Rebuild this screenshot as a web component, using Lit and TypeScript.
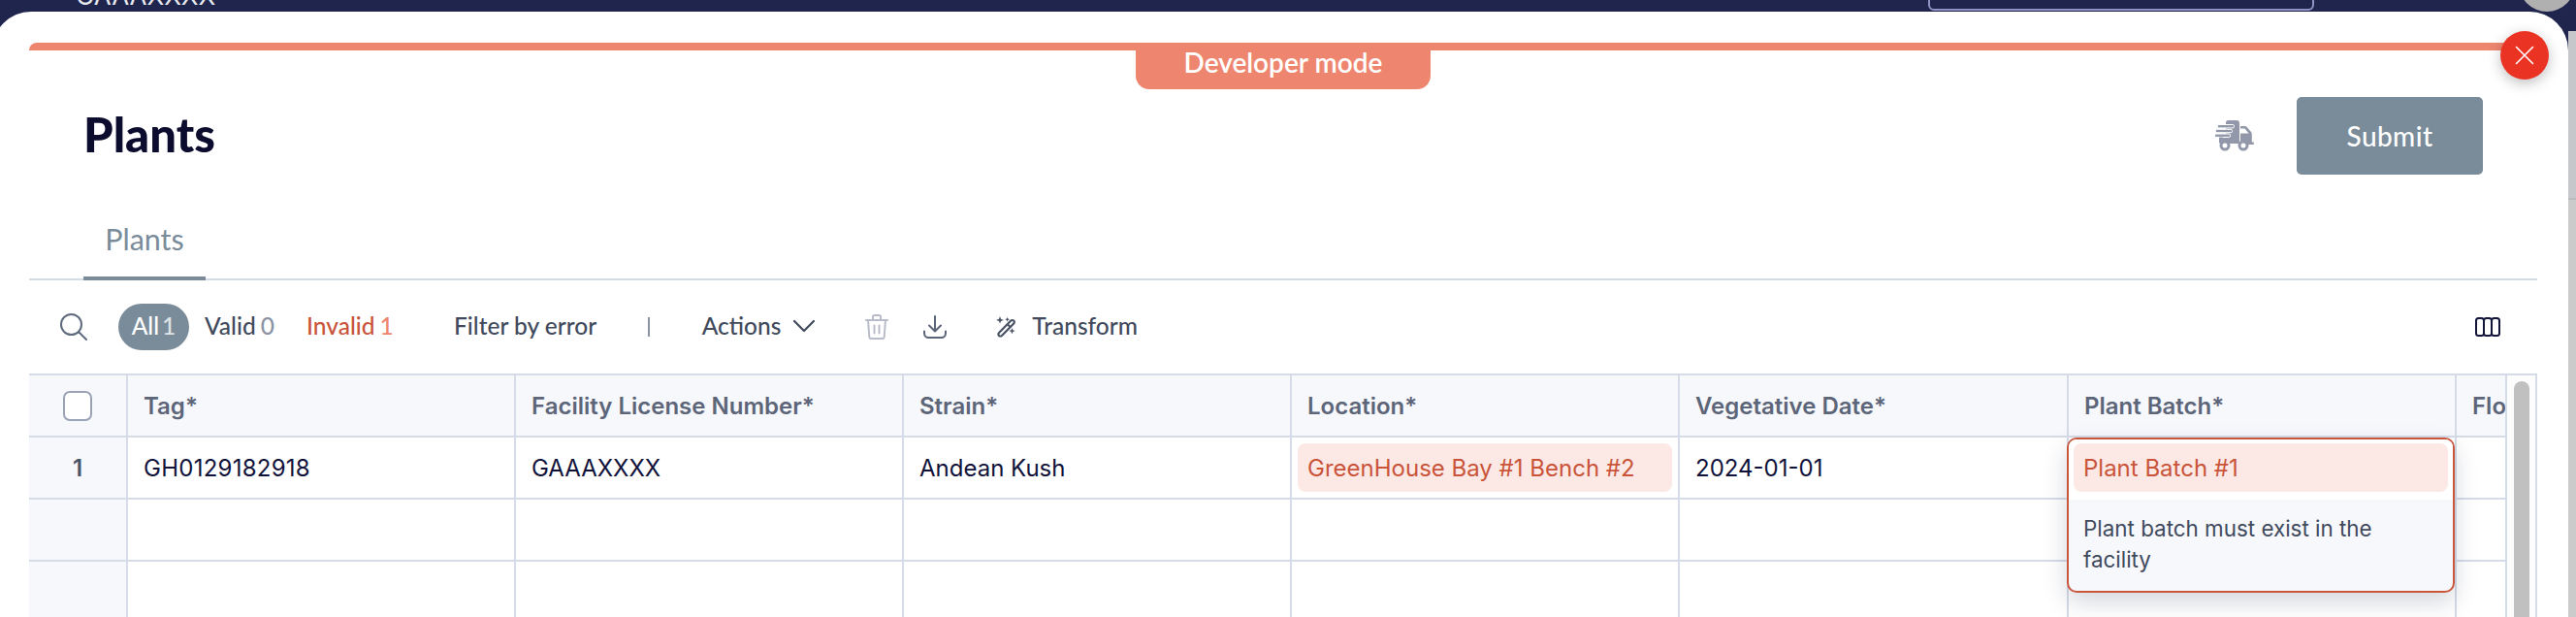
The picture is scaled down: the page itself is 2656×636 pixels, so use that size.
import { LitElement, html, css } from "lit";
import { customElement } from "lit/decorators.js";

const truck = html`<svg class="truck" width="40" height="32" viewBox="0 0 40 32" fill="#9298a9">
  <path d="M11 2.5A2.5 2.5 0 0 1 13.5 0H22a3 3 0 0 1 3 3v21H8v-6h3z"/>
  <path d="M26 6h4.5a3 3 0 0 1 2.2 1L37 12a3 3 0 0 1 .8 2v8.5h2V25H26z"/>
  <rect x="2.500" y="4.500" width="17" height="3.400" rx="1.300" stroke="#fff" stroke-width="1"/>
  <rect x="0.500" y="9.300" width="17" height="3.400" rx="1.300" stroke="#fff" stroke-width="1"/>
  <rect x="-0.500" y="14" width="16" height="3.400" rx="1.300" stroke="#fff" stroke-width="1"/>
  <rect x="4" y="17.500" width="4" height="6"/>
  <path d="M26 8.500h4.500l4 5H26z" fill="#fff"/>
  <circle cx="10" cy="26" r="4" fill="#fff" stroke="#9298a9" stroke-width="3"/>
  <circle cx="29" cy="26" r="4" fill="#fff" stroke="#9298a9" stroke-width="3"/>
</svg>`;

const close = html`<svg width="20" height="20" viewBox="0 0 20 20" fill="none" stroke="#fff" stroke-width="1.600" stroke-linecap="round">
  <path d="M1.500 1.500l17 17M18.500 1.500l-17 17"/>
</svg>`;

const search = html`<svg width="28" height="28" viewBox="0 0 28 28" fill="none" stroke="#5f6b7d" stroke-width="2" stroke-linecap="round">
  <circle cx="11.500" cy="11.500" r="10.500"/><path d="M19.500 19.500L27 27"/>
</svg>`;

const chevron = html`<svg width="24" height="14" viewBox="0 0 24 14" fill="none" stroke="#414a5c" stroke-width="2.200" stroke-linecap="round" stroke-linejoin="round">
  <path d="M2 2l10 10L22 2"/>
</svg>`;

const trash = html`<svg width="24" height="26" viewBox="0 0 24 26" fill="none" stroke="#b9bdc9" stroke-width="2" stroke-linecap="round" stroke-linejoin="round">
  <path d="M1 6h22M8 6V2.500A1.500 1.500 0 0 1 9.500 1h5A1.500 1.500 0 0 1 16 2.500V6M3 6l1.300 17a2 2 0 0 0 2 2h11.400a2 2 0 0 0 2-2L21 6M9.500 11.500v8M14.500 11.500v8"/>
</svg>`;

const download = html`<svg width="24" height="24" viewBox="0 0 24 24" fill="none" stroke="#5b6478" stroke-width="2" stroke-linecap="round" stroke-linejoin="round">
  <path d="M12 1v15M6 10.500l6 6 6-6M1 16.500v2A4.500 4.500 0 0 0 5.500 23h13a4.500 4.500 0 0 0 4.500-4.500v-2"/>
</svg>`;

const wand = html`<svg width="22" height="22" viewBox="0 0 22 22" fill="#4a5264">
  <path d="M16.300 4.600a2 2 0 0 1 2.900 0 2 2 0 0 1 0 2.900L6.900 19.900a2 2 0 0 1-2.900 0 2 2 0 0 1 0-2.900z" fill="none" stroke="#4a5264" stroke-width="2.200"/>
  <path d="M12.800 8.200l3 3" stroke="#4a5264" stroke-width="2"/>
  <path d="M5 0l1 2.800L8.800 4 6 5 5 7.800 4 5 1.200 4 4 2.800zM12.600 1l.7 1.600 1.700.7-1.700.7-.7 1.600-.7-1.600-1.700-.7 1.700-.7zM17.500 12l.9 2.200 2.200.9-2.200.9-.9 2.200-.9-2.200-2.200-.9 2.200-.9z"/>
</svg>`;

const cols = html`<svg width="26" height="20" viewBox="0 0 26 20" fill="none" stroke="#12143a" stroke-width="2" stroke-linejoin="round">
  <rect x="1" y="1" width="8" height="18" rx="2.500"/><rect x="9" y="1" width="8" height="18" rx="2.500"/><rect x="17" y="1" width="8" height="18" rx="2.500"/>
</svg>`;

const headers = ["Tag*", "Facility License Number*", "Strain*", "Location*", "Vegetative Date*", "Plant Batch*", "Flo"];

@customElement("app-root")
export class AppRoot extends LitElement {
  static styles = css`
    :host { display: block; width: 2656px; height: 636px; overflow: hidden; background: #1f254c; font-family: "Inter", "Liberation Sans", sans-serif; position: relative; }
    .nav { height: 12px; position: relative; overflow: hidden; display: flex; align-items: flex-end; }
    .nav-license { position: absolute; left: 78px; bottom: 2px; color: #e8e9ef; font-size: 26px; line-height: 28px; font-family: "Inter", sans-serif; }
    .nav-input { position: absolute; left: 1988px; width: 398px; height: 30px; bottom: 1px; box-sizing: border-box; border: 2px solid #8f93c4; border-radius: 6px; }
    .nav-avatar { position: absolute; left: 2597px; bottom: 0; width: 58px; height: 58px; border-radius: 50%; background: #b0b0b0; }
    .body { display: flex; height: 624px; }
    .modal { margin-left: -8px; width: 2656px; height: 624px; flex: none; box-sizing: border-box; background: #fff; border-radius: 40px 40px 0 0; padding: 32px 32px 0 38px; position: relative; overflow: hidden; }
    .strip { width: 8px; flex: none; display: flex; flex-direction: column; }
    .strip-top { height: 20px; background: #1f254c; }
    .strip-a { height: 172px; background: #c5c7cb; border-bottom: 2px solid #b8babe; }
    .strip-b { flex: 1; background: #cbcbcb; }
    .bar { height: 8px; background: #ee866f; border-radius: 8px 8px 0 0; }
    .badge { position: absolute; left: 1179px; top: 40px; width: 304px; height: 40px; box-sizing: border-box; padding-bottom: 16px; background: #ee866f; color: #fff; border-radius: 0 0 14px 14px; font-family: "Lato", sans-serif; font-weight: 600; font-size: 28px; display: flex; align-items: center; justify-content: center; }
    .close { position: absolute; left: 2586px; top: 20px; width: 50px; height: 50px; border-radius: 50%; background: #ea3323; display: flex; align-items: center; justify-content: center; box-shadow: 0 4px 14px rgba(0,0,0,.25); }
    .head { display: flex; align-items: center; justify-content: space-between; padding: 48px 56px 0 56px; height: 80px; }
    h1 { margin: 0 0 4px; font-family: "Lato", sans-serif; font-weight: 900; font-size: 49px; color: #0c0d2e; }
    .head-right { display: flex; align-items: center; gap: 44px; }
    .submit { width: 192px; height: 80px; background: #7a8c9a; color: #fff; border-radius: 5px; display: flex; align-items: center; justify-content: center; font-family: "Lato", sans-serif; font-weight: 500; font-size: 28px; letter-spacing: .4px; }
    .tabs { margin-top: 25px; height: 84px; box-sizing: border-box; border-bottom: 2px solid #d5dbe7; display: flex; padding-left: 56px; }
    .tab { width: 126px; height: 84px; box-sizing: border-box; border-bottom: 4px solid #7a8c9a; color: #7a8c9a; font-family: "Lato", sans-serif; font-size: 30.500px; display: flex; justify-content: center; padding-top: 23px; }
    .toolbar { height: 96px; display: flex; align-items: center; padding-left: 32px; color: #414a5c; font-family: "Lato", sans-serif; font-weight: 500; font-size: 24.500px; white-space: nowrap; }
    .icon { display: flex; }
    .pill { margin-left: 32px; width: 73px; height: 48px; box-sizing: border-box; padding-bottom: 3px; border-radius: 24px; background: #7a8c9a; color: #fff; display: flex; align-items: center; justify-content: center; gap: 3px; }
    .pill i, .count i { font-style: normal; opacity: .75; }
    .count { display: flex; gap: 5px; margin-bottom: 3px; }
    .valid { margin-left: 16px; width: 72px; }
    .valid i { color: #8b93a5; opacity: 1; }
    .invalid { margin-left: 33px; width: 84px; color: #c9543a; }
    .invalid i { color: #ee866f; opacity: 1; }
    .filter { margin-left: 68px; margin-bottom: 3px; }
    .sep { margin-left: 53px; width: 1.500px; height: 20px; background: #8b93a5; }
    .actions { margin-left: 54px; display: flex; align-items: center; gap: 12px; margin-bottom: 3px; }
    .trash { margin-left: 51px; }
    .download { margin-left: 36px; }
    .wand { margin-left: 50px; }
    .transform { margin-left: 16px; margin-bottom: 3px; }
    .cols { margin-left: auto; margin-right: 38px; }
    .tablewrap { border-top: 2px solid #d5dbe7; border-right: 2px solid #d5dbe7; background: #fff; display: flex; height: 300px; }
    .grid { width: 2555px; height: 300px; flex: none; overflow: hidden; display: grid; grid-template-columns: 102px 400px 400px 400px 400px 401px 400px 52px; grid-auto-rows: 64px; background: #fff; }
    .track { flex: 1; position: relative; background: #fdfdfd; }
    .thumb { position: absolute; left: 7px; top: 6px; width: 16px; height: 300px; border-radius: 8px; background: #c0c0c0; }
    .c { box-sizing: border-box; border-right: 2px solid #d5dbe7; border-bottom: 2px solid #d5dbe7; display: flex; align-items: center; padding-left: 16px; font-size: 24px; color: #10123a; white-space: nowrap; overflow: hidden; position: relative; }
    .tag { letter-spacing: .25px; }
    .g { background: #f6f8fc; }
    .hd { background: #f6f8fc; color: #5d6579; font-weight: 600; font-size: 24px; }
    .idx { justify-content: center; padding: 0; color: #4a5568; font-weight: 600; }
    .check { width: 30px; height: 31px; box-sizing: border-box; border: 2px solid #9aa3b5; border-radius: 7px; background: #fff; }
    .loc { padding: 6px; }
    .chip { flex: 1; height: 50px; border-radius: 8px; background: #fce9e6; color: #c9543a; display: flex; align-items: center; padding-left: 10px; }
    .batch { overflow: visible; padding: 0; z-index: 2; }
    .pop { position: absolute; left: -2px; top: 0; width: 400px; height: 160px; box-sizing: border-box; border: 2px solid #c9573c; border-radius: 10px; background: #f6f8fc; overflow: hidden; }
    .shadow { position: absolute; left: -2px; top: 0; width: 400px; height: 160px; border-radius: 10px; box-shadow: 0 10px 24px rgba(30,40,70,.18); }
    .pop-top { height: 62px; box-sizing: border-box; background: #fff; padding: 4px 5px; display: flex; }
    .pop-msg { padding: 14px 15px; font-size: 22.400px; line-height: 32px; color: #414a5c; white-space: normal; }
  `;

  render() {
    const empty = (n: number) => html`<div class="c g"></div>${Array.from({ length: n }, () => html`<div class="c"></div>`)}`;
    return html`
      <div class="nav">
        <span class="nav-license">GAAAXXXX</span>
        <span class="nav-input"></span>
        <span class="nav-avatar"></span>
      </div>
      <div class="body">
        <div class="modal">
          <div class="bar"></div>
          <div class="badge">Developer mode</div>
          <div class="close">${close}</div>
          <div class="head">
            <h1>Plants</h1>
            <div class="head-right">${truck}<div class="submit">Submit</div></div>
          </div>
          <div class="tabs"><div class="tab">Plants</div></div>
          <div class="toolbar">
            <span class="icon">${search}</span>
            <span class="pill">All <i>1</i></span>
            <span class="count valid">Valid <i>0</i></span>
            <span class="count invalid">Invalid <i>1</i></span>
            <span class="filter">Filter by error</span>
            <span class="sep"></span>
            <span class="actions">Actions ${chevron}</span>
            <span class="icon trash">${trash}</span>
            <span class="icon download">${download}</span>
            <span class="icon wand">${wand}</span>
            <span class="transform">Transform</span>
            <span class="icon cols">${cols}</span>
          </div>
          <div class="tablewrap">
            <div class="grid">
              <div class="c g idx"><span class="check"></span></div>
              ${headers.map((h) => html`<div class="c hd">${h}</div>`)}
              <div class="c g idx">1</div>
              <div class="c tag">GH0129182918</div>
              <div class="c">GAAAXXXX</div>
              <div class="c">Andean Kush</div>
              <div class="c loc"><div class="chip">GreenHouse Bay #1 Bench #2</div></div>
              <div class="c">2024-01-01</div>
              <div class="c batch">
                <div class="shadow"></div>
                <div class="pop">
                  <div class="pop-top"><div class="chip">Plant Batch #1</div></div>
                  <div class="pop-msg">Plant batch must exist in the facility</div>
                </div>
              </div>
              <div class="c"></div>
              ${empty(7)}
              ${empty(7)}
            </div>
            <div class="track"><div class="thumb"></div></div>
          </div>
        </div>
        <div class="strip"><div class="strip-top"></div><div class="strip-a"></div><div class="strip-b"></div></div>
      </div>
    `;
  }
}
